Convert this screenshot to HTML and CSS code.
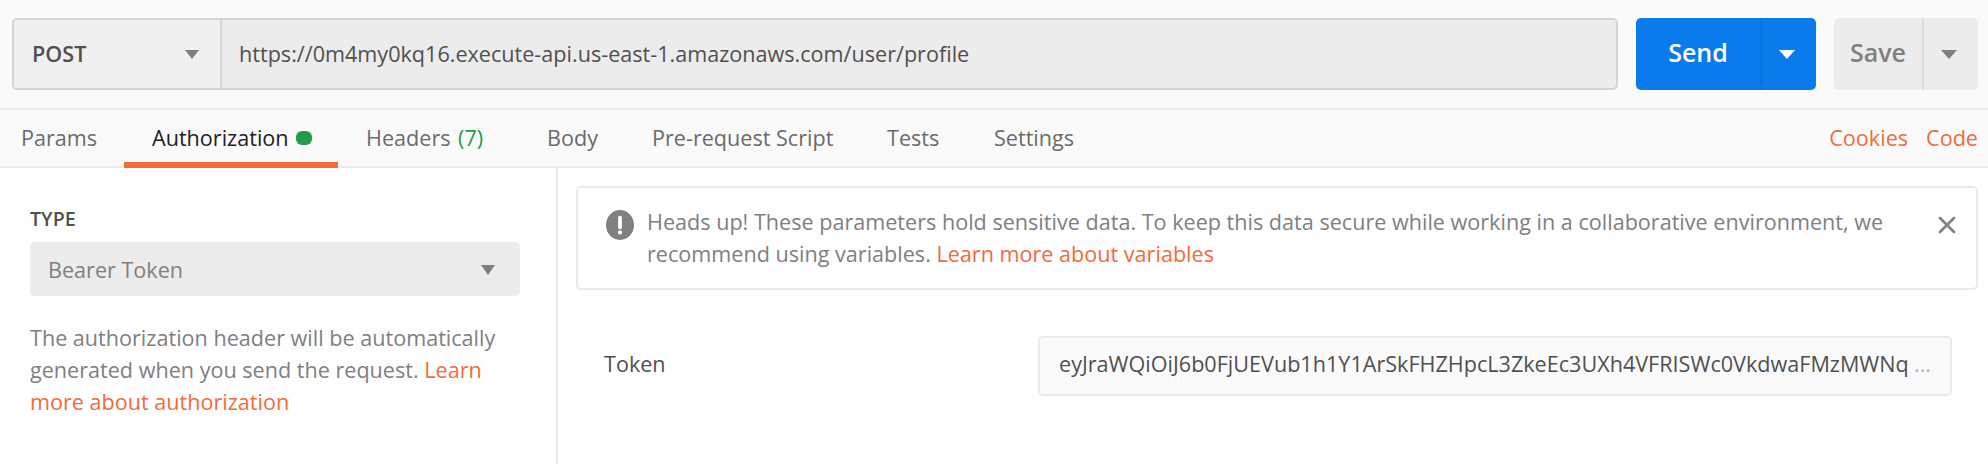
FILE: index.html
```html
<!DOCTYPE html>
<html lang="en">
<head>
<meta charset="utf-8">
<title>Request builder</title>
<link rel="stylesheet" href="styles.css">
</head>
<body>
<main class="app">
  <header class="request-bar">
    <div class="url-group">
      <div class="method"><span class="method-name">POST</span><svg class="caret" viewBox="0 0 14 9"><path d="M0 0H14L7 9Z"/></svg></div>
      <div class="url">https://0m4my0kq16.execute-api.us-east-1.amazonaws.com/user/profile</div>
    </div>
    <div class="split send">
      <div class="split-main">Send</div>
      <div class="split-more"><svg class="caret wide" viewBox="0 0 16 9"><path d="M0 0H16L8 9Z"/></svg></div>
    </div>
    <div class="split save">
      <div class="split-main">Save</div>
      <div class="split-more"><svg class="caret wide" viewBox="0 0 16 9"><path d="M0 0H16L8 9Z"/></svg></div>
    </div>
  </header>
  <nav class="tabs">
    <div class="tab params">Params</div>
    <div class="tab auth">Authorization<span class="dot"></span></div>
    <div class="tab headers">Headers <span class="count">(7)</span></div>
    <div class="tab body">Body</div>
    <div class="tab prereq">Pre-request Script</div>
    <div class="tab tests">Tests</div>
    <div class="tab settings">Settings</div>
    <div class="links"><a class="link">Cookies</a><a class="link">Code</a></div>
  </nav>
  <div class="content">
    <aside class="side">
      <div class="side-label">TYPE</div>
      <div class="select"><span>Bearer Token</span><svg class="caret select-caret" viewBox="0 0 14 10"><path d="M0 0H14L7 10Z"/></svg></div>
      <p class="help">The authorization header will be automatically<br>generated when you send the request. <a class="link">Learn<br>more about authorization</a></p>
    </aside>
    <section class="main">
      <div class="alert">
        <svg class="alert-icon" viewBox="0 0 28 30"><ellipse cx="14" cy="15" rx="14" ry="15" fill="#808080"/><path d="M14 7.7V17.3" stroke="#fff" stroke-width="3.8" stroke-linecap="round"/><circle cx="14" cy="22.4" r="2.1" fill="#fff"/></svg>
        <p class="alert-text">Heads up! These parameters hold sensitive data. To keep this data secure while working in a collaborative environment, we<br>recommend using variables. <a class="link">Learn more about variables</a></p>
        <svg class="close" viewBox="0 0 18 18"><path d="M2 2L16 16M16 2L2 16" stroke="#808080" stroke-width="2.7" stroke-linecap="round"/></svg>
      </div>
      <div class="field">
        <div class="field-label">Token</div>
        <div class="field-input"><span class="token">eyJraWQiOiJ6b0FjUEVub1h1Y1ArSkFHZHpcL3ZkeEc3UXh4VFRISWc0VkdwaFMzMWNq</span><span class="more">...</span></div>
      </div>
    </section>
  </div>
</main>
</body>
</html>
```
FILE: styles.css
```css
* { box-sizing: border-box; }
body { margin: 0; background: #fefefe; font-family: "Open Sans", sans-serif; font-size: 21.6px; color: #505050; }
.app { width: 1988px; height: 464px; display: flex; flex-direction: column; overflow: hidden; white-space: nowrap; }
.request-bar { height: 110px; padding: 18px 10px 18px 12px; display: flex; gap: 18px; background: #fafafa; border-bottom: 2px solid #eaeaea; }
.url-group { width: 1606px; height: 72px; display: flex; border: 2px solid #d4d4d4; border-radius: 5px; background: #ececec; line-height: 67px; overflow: hidden; }
.method { width: 208px; padding: 0 21px 0 18px; display: flex; align-items: center; justify-content: space-between; background: #f0f0f0; border-right: 2px solid #d4d4d4; }
.method-name { font-weight: 600; line-height: 68px; padding-bottom: 1px; }
.url { padding-left: 17px; }
.caret { width: 14px; height: 9px; fill: #808080; }
.caret.wide { width: 16px; }
.split { height: 72px; display: flex; border-radius: 5px; overflow: hidden; font-size: 25px; font-weight: 600; line-height: 68px; }
.split-main { text-align: center; }
.split-more { flex: 1; display: flex; align-items: center; justify-content: center; padding-right: 4px; border-left: 2px solid; }
.send { width: 180px; background: #097bed; color: #fff; }
.send .split-main { width: 124px; }
.send .split-more { border-color: #0871db; }
.send .caret { fill: #fff; }
.save { width: 144px; background: #ececec; color: #808080; }
.save .split-main { width: 88px; }
.save .split-more { border-color: #dbdbdb; }
.tabs { height: 58px; display: flex; background: #fafafa; border-bottom: 2px solid #eaeaea; line-height: 55px; color: #6b6b6b; }
.tab { height: 58px; padding-left: 28px; flex: none; }
.params { width: 124px; padding-left: 21px; }
.auth { width: 214px; display: flex; align-items: center; gap: 7px; color: #212121; border-bottom: 6px solid #f26b3a; line-height: 52px; padding-top: 3px; }
.dot { width: 16px; height: 14px; border-radius: 6px; background: #249c47; }
.headers { width: 181px; }
.count { color: #249c47; margin-left: 2px; }
.body { width: 105px; }
.prereq { width: 235px; }
.tests { width: 107px; }
.links { margin-left: auto; padding-right: 10px; display: flex; gap: 18px; }
.link { color: #f26b3a; }
.content { flex: 1; display: flex; }
.side { width: 558px; padding: 36px 36px 0 30px; border-right: 2px solid #eaeaea; }
.side-label { height: 38px; line-height: 30px; font-size: 19.6px; font-weight: 600; }
.select { width: 490px; height: 54px; padding: 0 25px 0 18px; display: flex; align-items: center; justify-content: space-between; border-radius: 5px; background: #ececec; color: #808080; }
.select-caret { height: 10px; margin-top: 2px; }
.help { margin: 26px 0 0; line-height: 32px; color: #808080; }
.main { flex: 1; padding: 18px 10px 0 18px; }
.alert { height: 104px; display: flex; align-items: flex-start; padding: 18px 20px 0 28px; border: 2px solid #eaeaea; border-radius: 5px; color: #808080; line-height: 32px; }
.alert-icon { width: 28px; height: 30px; margin: 4px 13px 0 0; }
.alert-text { margin: 0; flex: 1; }
.close { width: 18px; height: 18px; margin-top: 10px; }
.field { margin-top: 46px; padding: 0 26px 0 28px; display: flex; justify-content: space-between; }
.field-label { line-height: 56px; }
.field-input { width: 914px; height: 60px; padding: 0 19px; display: flex; justify-content: space-between; background: #fafafa; border: 2px solid #eaeaea; border-radius: 5px; line-height: 52px; }
.more { color: #b5b5b5; }
```
